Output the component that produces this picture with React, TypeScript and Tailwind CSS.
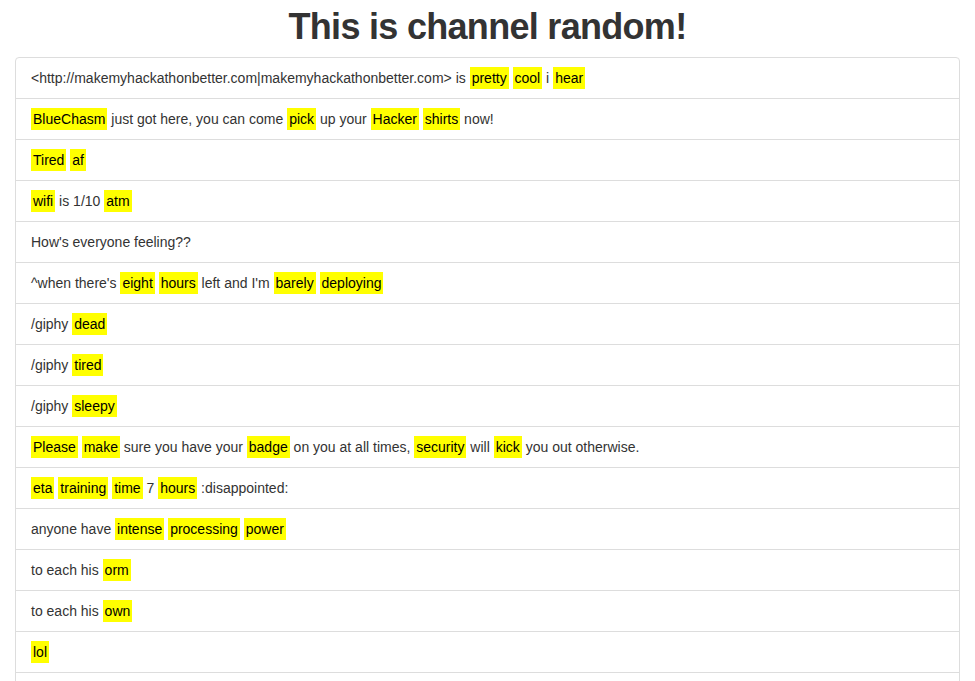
import React from "react";

type Seg = string | { m: string };

const rows: Seg[][] = [
  ["<http://makemyhackathonbetter.com|makemyhackathonbetter.com> is ", { m: "pretty" }, " ", { m: "cool" }, " i ", { m: "hear" }],
  [{ m: "BlueChasm" }, " just got here, you can come ", { m: "pick" }, " up your ", { m: "Hacker" }, " ", { m: "shirts" }, " now!"],
  [{ m: "Tired" }, " ", { m: "af" }],
  [{ m: "wifi" }, " is 1/10 ", { m: "atm" }],
  ["How's everyone feeling??"],
  ["^when there's ", { m: "eight" }, " ", { m: "hours" }, " left and I'm ", { m: "barely" }, " ", { m: "deploying" }],
  ["/giphy ", { m: "dead" }],
  ["/giphy ", { m: "tired" }],
  ["/giphy ", { m: "sleepy" }],
  [{ m: "Please" }, " ", { m: "make" }, " sure you have your ", { m: "badge" }, " on you at all times, ", { m: "security" }, " will ", { m: "kick" }, " you out otherwise."],
  [{ m: "eta" }, " ", { m: "training" }, " ", { m: "time" }, " 7 ", { m: "hours" }, " :disappointed:"],
  ["anyone have ", { m: "intense" }, " ", { m: "processing" }, " ", { m: "power" }],
  ["to each his ", { m: "orm" }],
  ["to each his ", { m: "own" }],
  [{ m: "lol" }],
  ["\u00a0"],
];

export default function App() {
  return (
    <div
      className="min-h-screen bg-white text-[#333] px-[15px]"
      style={{ fontFamily: '"Liberation Sans", Arial, Helvetica, sans-serif' }}
    >
      <h1 className="pt-[7px] mb-[10px] text-center text-[36px] leading-[39.6px] font-bold tracking-[-0.7px]">
        This is channel random!
      </h1>
      <ul className="flex flex-col">
        {rows.map((r, i) => (
          <li
            key={i}
            className={
              "border border-[#ddd] bg-white px-[15px] py-[10px] text-[14px] leading-[20px] whitespace-pre " +
              (i === 0 ? "rounded-t-[4px] " : "mt-[-1px] ")
            }
          >
            {r.map((s, j) =>
              typeof s === "string" ? (
                <span key={j}>{s}</span>
              ) : (
                <mark key={j} className="bg-[#ffff00] text-black px-[2px] py-[3px]">
                  {s.m}
                </mark>
              )
            )}
          </li>
        ))}
      </ul>
    </div>
  );
}
